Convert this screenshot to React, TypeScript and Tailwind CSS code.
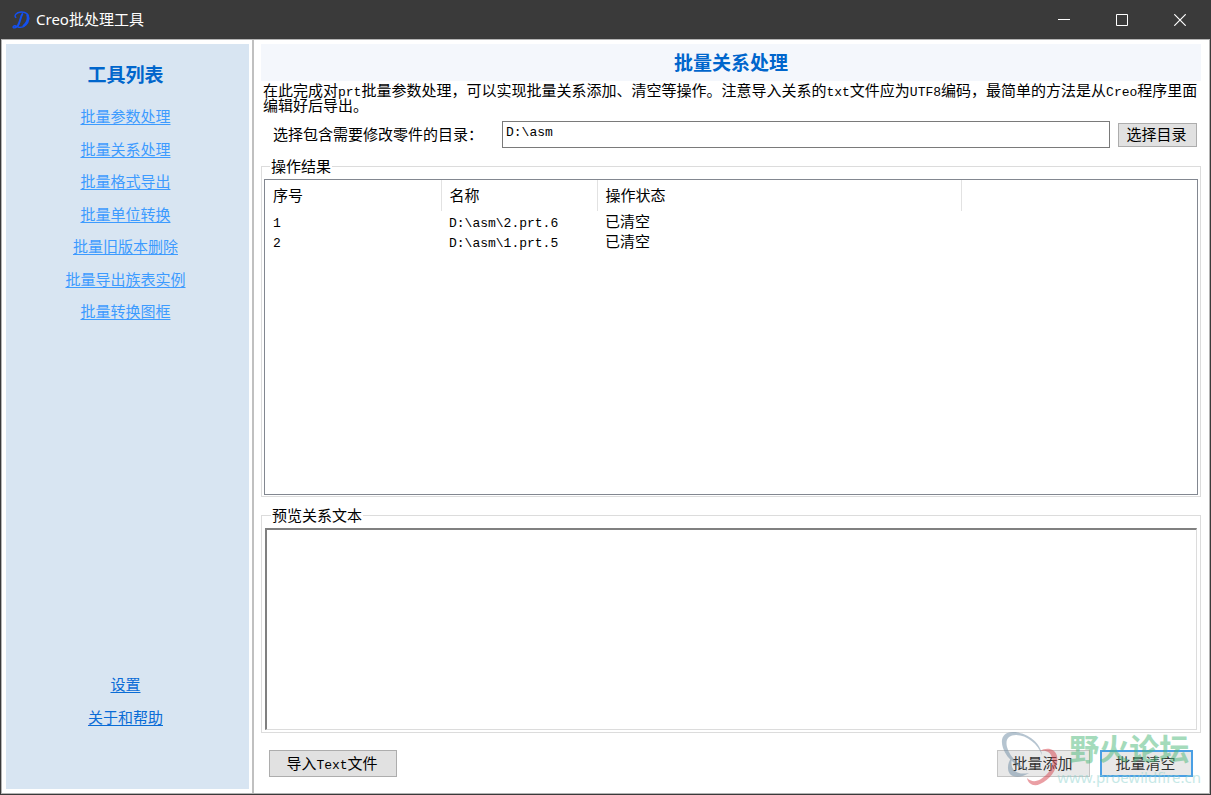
import type { ReactNode } from "react";

const tools = [
  "批量参数处理",
  "批量关系处理",
  "批量格式导出",
  "批量单位转换",
  "批量旧版本删除",
  "批量导出族表实例",
  "批量转换图框",
];

const results = [
  { id: 1, name: "D:\\asm\\2.prt.6", status: "已清空" },
  { id: 2, name: "D:\\asm\\1.prt.5", status: "已清空" },
];

function Mono({ children }: { children: ReactNode }) {
  return (
    <span className="font-['Liberation_Mono',monospace] text-[13px] leading-0">{children}</span>
  );
}

function AppLogo() {
  return (
    <svg viewBox="0 0 18 18" className="h-[18px] w-[18px]" fill="none" stroke="#1450f0" strokeLinecap="round">
      <path
        d="M3.8 6.4C2 5.2 3.6 1.4 9 1C14.4.8 17.2 3.6 16.8 8C16.2 12.8 12.2 16.4 8 16.4C5.8 16.2 4.8 14.8 2.8 14.8C1 15 .6 16.4 1.6 16.8C4.4 17.2 6 15.2 7 12.6"
        strokeWidth="1.4"
      />
      <path d="M10.4 3C8.6 5.6 8.4 10 6.2 14" strokeWidth="2" />
      <path d="M15.4 4C16.4 7.6 15 12 11.6 14.8" strokeWidth="2.2" />
    </svg>
  );
}

function TitleBar() {
  return (
    <header className="flex h-[39px] shrink-0 items-center bg-[#3a3a3a] pl-[11px] text-white">
      <AppLogo />
      <h1 className="ml-1.5 pb-0.5 font-['Noto_Sans','Noto_Sans_CJK_SC',sans-serif] text-[15px] leading-5">
        Creo批处理工具
      </h1>
      <div className="ml-auto flex h-full pr-px">
        <button type="button" aria-label="最小化" className="flex w-[58px] items-center justify-center">
          <svg viewBox="0 0 12 12" className="h-3 w-3" stroke="currentColor">
            <path d="M0 5.5H12" />
          </svg>
        </button>
        <button type="button" aria-label="最大化" className="flex w-[58px] items-center justify-center">
          <svg viewBox="0 0 12 12" className="h-3 w-3" fill="none" stroke="currentColor">
            <path d="M.5 .5H11.5V11.5H.5Z" />
          </svg>
        </button>
        <button type="button" aria-label="关闭" className="flex w-[58px] items-center justify-center">
          <svg viewBox="0 0 12 12" className="h-3 w-3" stroke="currentColor">
            <path d="M.3 .3L11.7 11.7M11.7 .3L.3 11.7" strokeWidth="1.2" />
          </svg>
        </button>
      </div>
    </header>
  );
}

function Sidebar() {
  return (
    <aside className="my-1 mr-[3px] ml-1 flex w-[243px] shrink-0 flex-col items-center bg-[#d8e5f2] pt-5 pr-1 pb-[62px]">
      <h2 className="text-[19px] leading-5 font-bold text-[#0066cc]">工具列表</h2>
      <nav className="mt-[22px] flex h-[215px] flex-col items-center justify-between">
        {tools.map((tool) => (
          <a key={tool} href="#" className="leading-5 text-[#3d9bff] underline underline-offset-2">
            {tool}
          </a>
        ))}
      </nav>
      <div className="mt-auto flex flex-col items-center gap-[13px] text-[#0a6cd6]">
        <a href="#" className="leading-5 underline underline-offset-2">设置</a>
        <a href="#" className="leading-5 underline underline-offset-2">关于和帮助</a>
      </div>
    </aside>
  );
}

function ResultTable() {
  return (
    <div className="min-h-0 flex-1 border border-[#828790] bg-white">
      <table className="w-full table-fixed border-collapse text-left">
        <colgroup>
          <col className="w-[176px]" />
          <col className="w-[156px]" />
          <col className="w-[364px]" />
          <col />
        </colgroup>
        <thead>
          <tr className="h-[31px]">
            <th className="border-r border-[#e2e2e2] pl-2 font-normal">序号</th>
            <th className="border-r border-[#e2e2e2] pl-2 font-normal">名称</th>
            <th className="border-r border-[#e2e2e2] pl-2 font-normal">操作状态</th>
            <th />
          </tr>
        </thead>
        <tbody>
          {results.map((row) => (
            <tr key={row.id} className="h-5 leading-5">
              <td className="pl-2"><Mono>{row.id}</Mono></td>
              <td className="pl-2"><Mono>{row.name}</Mono></td>
              <td className="pl-2">{row.status}</td>
              <td />
            </tr>
          ))}
        </tbody>
      </table>
    </div>
  );
}

function Watermark() {
  return (
    <div className="pointer-events-none absolute right-2 bottom-1.5 flex items-end opacity-50">
      <svg viewBox="0 0 60 56" className="-mr-1 h-14 w-[60px]">
        <path
          d="M41 24C40 11 25 1 12 1C2 1-1 8 2 17C5 26 13 34 27 40C15 32 8 24 6 16C4 8 8 4 15 4C26 4 37 13 41 24Z"
          fill="#6e8ba3"
        />
        <path d="M11 26C5 33 6 43 12 45C17 47 23 45 28 42C22 43 17 43 14 40C10 37 10 32 11 26Z" fill="#6e8ba3" />
        <path
          d="M39 20C45 16 54 17 56 25C58 35 51 48 39 53C33 56 27 53 26 47C30 51 35 51 40 48C48 43 53 35 51 27C50 21 45 19 39 20Z"
          fill="#d6424c"
        />
      </svg>
      <div className="flex flex-col items-start">
        <span className="pl-3 text-[30px] leading-7 font-bold text-[#4cb87a]">野火论坛</span>
        <span className="mt-1.5 font-['Noto_Sans',sans-serif] text-[15px] leading-5 text-[#8fd3cf]">
          www.proewildfire.cn
        </span>
      </div>
    </div>
  );
}

export default function App() {
  return (
    <div className="flex min-h-screen flex-col bg-[#3a3a3a] px-px pb-px font-['Noto_Sans_CJK_SC',sans-serif] text-[15px] text-black">
      <TitleBar />
      <div className="relative flex flex-1 border border-[#b4b4b4] bg-white">
        <Sidebar />
        <main className="flex min-w-0 flex-1 flex-col border-l-2 border-[#c0c0c0] pt-1 pr-2 pl-[7px]">
          <h2 className="bg-[#f4f7fc] pb-px text-center text-[19px] leading-9 font-bold text-[#0066cc]">
            批量关系处理
          </h2>
          <p className="mt-px pl-0.5 leading-[15px] break-all">
            在此完成对<Mono>prt</Mono>批量参数处理，可以实现批量关系添加、清空等操作。注意导入关系的<Mono>txt</Mono>
            文件应为<Mono>UTF8</Mono>编码，最简单的方法是从<Mono>Creo</Mono>程序里面编辑好后导出。
          </p>
          <div className="mt-[9px] flex items-center pr-1 pl-3">
            <label htmlFor="directory" className="w-[229px] shrink-0 pb-0.5 leading-5">
              选择包含需要修改零件的目录：
            </label>
            <input
              id="directory"
              defaultValue={"D:\\asm"}
              className="h-[27px] min-w-0 flex-1 border border-[#7a7a7a] bg-white px-[3px] pb-1 font-['Liberation_Mono',monospace] text-[13px] leading-4 outline-none"
            />
            <button type="button" className="ml-2 h-6 w-[79px] border border-[#adadad] bg-[#e1e1e1] pr-0.5 pb-0.5 leading-5">
              选择目录
            </button>
          </div>
          <fieldset className="mt-2 flex min-h-0 min-w-0 flex-38 flex-col border border-[#dcdcdc] px-0.5 pt-[3px] pb-px">
            <legend className="ml-1.5 px-px leading-5">操作结果</legend>
            <ResultTable />
          </fieldset>
          <fieldset className="mt-2 flex min-h-0 min-w-0 flex-25 flex-col border border-[#dcdcdc] px-[3px] pt-[3px] pb-0.5">
            <legend className="ml-1.5 px-px leading-5">
              <label htmlFor="preview">预览关系文本</label>
            </legend>
            <textarea
              id="preview"
              className="min-h-0 flex-1 resize-none border-t-2 border-r border-b border-l-2 border-t-[#808080] border-r-[#dcdcdc] border-b-[#dcdcdc] border-l-[#808080] bg-white p-1 outline-none"
            />
          </fieldset>
          <div className="mt-[17px] mb-4 flex gap-2.5 pr-2 pl-2">
            <button type="button" className="mr-auto h-[27px] w-32 border border-[#adadad] bg-[#e1e1e1] pr-0.5 pb-0.5 leading-5">
              导入<Mono>Text</Mono>文件
            </button>
            <button type="button" className="h-[27px] w-[93px] border border-[#c4c4c4] bg-[#e8e8e8] pr-0.5 pb-0.5 leading-5 text-[#333333]">
              批量添加
            </button>
            <button type="button" className="h-[27px] w-[93px] border-2 border-[#4a9fe4] bg-[#e8e8e8] pr-0.5 pb-0.5 leading-5 text-[#333333]">
              批量清空
            </button>
          </div>
        </main>
        <Watermark />
      </div>
    </div>
  );
}
